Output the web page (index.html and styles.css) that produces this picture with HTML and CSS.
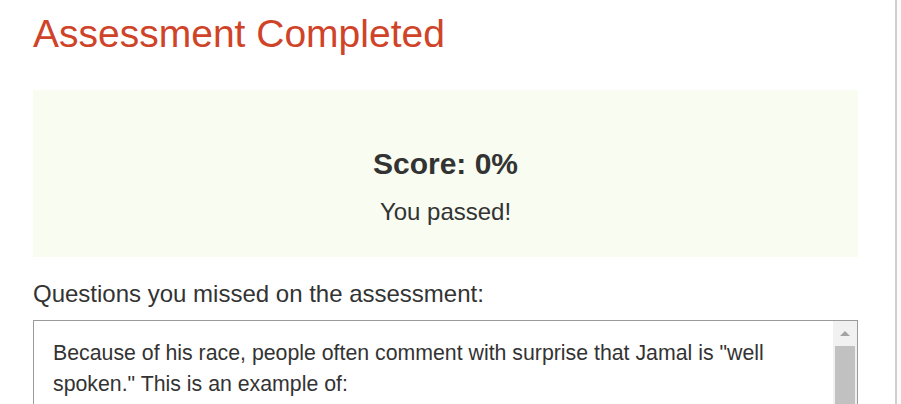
FILE: index.html
```html
<!DOCTYPE html>
<html>
<head>
<meta charset="utf-8">
<link rel="stylesheet" href="styles.css">
</head>
<body>
<div class="page">
  <main class="content">
    <h1 class="title">Assessment Completed</h1>
    <section class="result">
      <h2 class="score">Score: 0%</h2>
      <p class="passed">You passed!</p>
    </section>
    <h3 class="missed-label">Questions you missed on the assessment:</h3>
    <div class="missed-box">
      <div class="missed-text">
        <p>Because of his race, people often comment with surprise that Jamal is "well spoken." This is an example of:</p>
      </div>
      <div class="scrollbar">
        <div class="scroll-arrow"><span class="tri"></span></div>
        <div class="scroll-thumb"></div>
      </div>
    </div>
  </main>
  <div class="page-scroll"></div>
</div>
</body>
</html>
```
FILE: styles.css
```css
html, body {
  margin: 0;
  padding: 0;
  background: #fff;
  font-family: "Liberation Sans", Arial, sans-serif;
  color: #333;
}
.page {
  display: flex;
  height: 404px;
  overflow: hidden;
}
.content {
  width: 825px;
  padding-left: 33px;
  flex: none;
}
.title {
  margin: 11px 0 0;
  font-size: 39px;
  font-weight: normal;
  line-height: 45px;
  color: #cf4429;
}
.result {
  margin-top: 34px;
  height: 167px;
  background: #f8fcf1;
  text-align: center;
  padding-top: 56px;
  box-sizing: border-box;
}
.score {
  margin: 0;
  font-size: 30px;
  line-height: 36px;
  font-weight: bold;
  color: #333;
}
.passed {
  margin: 16px 0 0;
  font-size: 24px;
  line-height: 28px;
}
.missed-label {
  margin: 23px 0 0;
  font-size: 24px;
  font-weight: normal;
  line-height: 28px;
}
.missed-box {
  margin-top: 12px;
  border: 1px solid #9a9a9a;
  height: 120px;
  display: flex;
}
.missed-text {
  flex: 1;
  padding: 17px 20px 0 19px;
}
.missed-text p {
  margin: 0;
  font-size: 21.3px;
  line-height: 31px;
  color: #333;
}
.scrollbar {
  width: 24px;
  background: #f1f1f1;
  display: flex;
  flex-direction: column;
}
.scroll-arrow {
  height: 25px;
  display: flex;
  justify-content: center;
  align-items: center;
}
.tri {
  width: 0;
  height: 0;
  border-left: 5px solid transparent;
  border-right: 5px solid transparent;
  border-bottom: 5px solid #a3a3a3;
}
.scroll-thumb {
  margin: 0 2px;
  flex: 1;
  background: #c1c1c1;
}
.page-scroll {
  margin-left: 37px;
  width: 6px;
  border-left: 2px solid #cfcfcf;
  background: #fbfbfb;
}
```
